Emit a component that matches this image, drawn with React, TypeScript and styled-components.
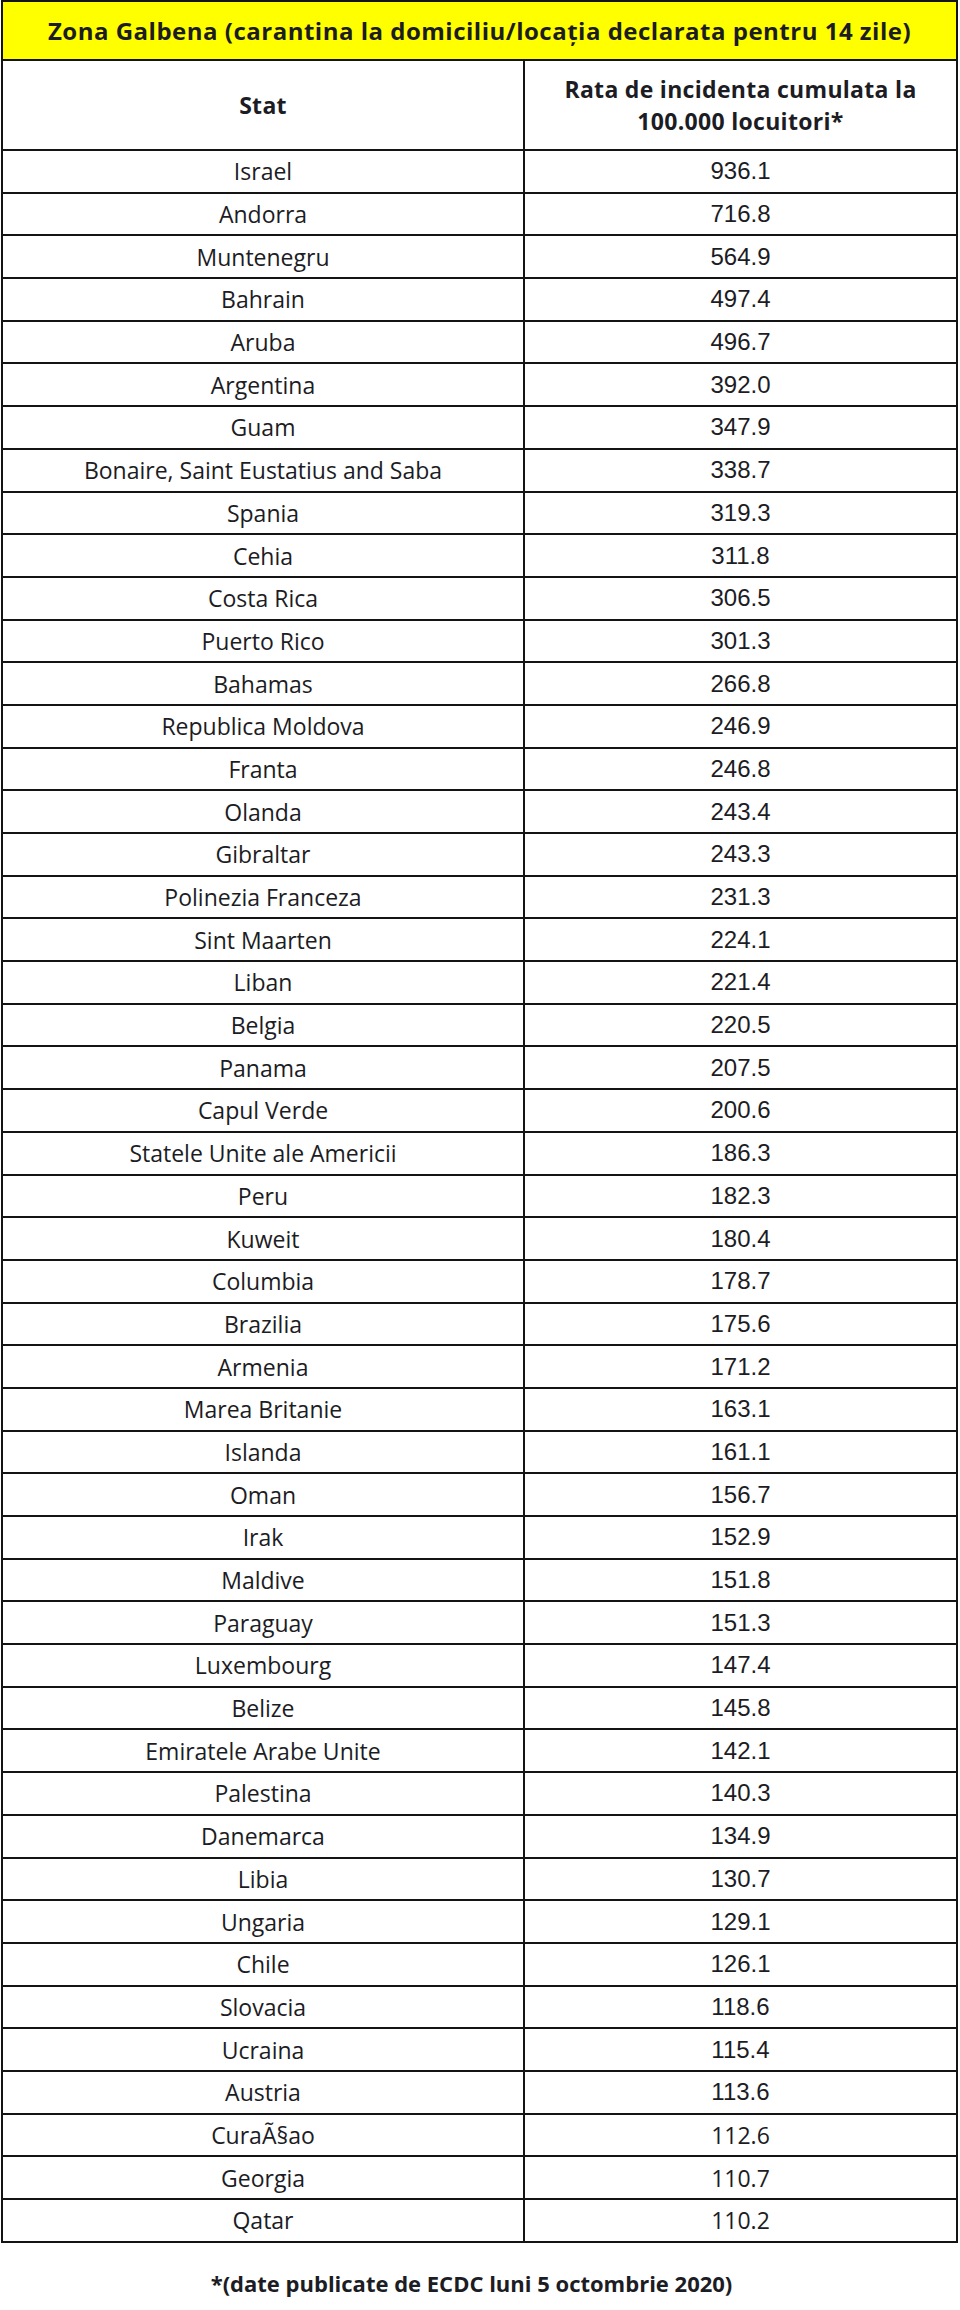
import React from 'react';
import styled, { createGlobalStyle } from 'styled-components';

const textFont = `"Open Sans", Lato, sans-serif`;
const numberFont = `"Liberation Sans", Arial, sans-serif`;
const ink = '#1c1c24';

const GlobalStyle = createGlobalStyle`
  html, body {
    margin: 0;
    padding: 0;
    background: #ffffff;
  }
`;

const Page = styled.div`
  width: 960px;
  padding: 0 2px 0 1px;
  box-sizing: border-box;
`;

const Table = styled.table`
  width: 100%;
  border-collapse: collapse;
  table-layout: fixed;
  color: ${ink};
  font-family: ${textFont};
`;

const TitleCell = styled.th`
  height: 57px;
  padding: 0;
  background: #ffff00;
  border: 2px solid #141414;
  font-size: 24px;
  font-weight: bold;
  letter-spacing: 0.5px;
  text-align: center;
`;

const HeadCell = styled.th`
  height: 88px;
  padding: 0;
  border: 2px solid #141414;
  font-size: 23px;
  font-weight: bold;
  letter-spacing: 0.3px;
  line-height: 32px;
  text-align: center;
`;

const Cell = styled.td<{ $number?: boolean; $alt?: boolean }>`
  height: 40.7px;
  padding: 0;
  border: 2px solid #141414;
  text-align: center;
  font-family: ${({ $number, $alt }) => ($number && !$alt ? numberFont : textFont)};
  font-size: ${({ $number, $alt }) => ($number && !$alt ? '24px' : '23px')};
`;

const Footnote = styled.p`
  margin: 25px 0 0;
  padding-right: 16px;
  text-align: center;
  font-family: ${textFont};
  font-size: 22px;
  font-weight: bold;
  color: ${ink};
`;

const rows: [string, string][] = [
  ['Israel', '936.1'],
  ['Andorra', '716.8'],
  ['Muntenegru', '564.9'],
  ['Bahrain', '497.4'],
  ['Aruba', '496.7'],
  ['Argentina', '392.0'],
  ['Guam', '347.9'],
  ['Bonaire, Saint Eustatius and Saba', '338.7'],
  ['Spania', '319.3'],
  ['Cehia', '311.8'],
  ['Costa Rica', '306.5'],
  ['Puerto Rico', '301.3'],
  ['Bahamas', '266.8'],
  ['Republica Moldova', '246.9'],
  ['Franta', '246.8'],
  ['Olanda', '243.4'],
  ['Gibraltar', '243.3'],
  ['Polinezia Franceza', '231.3'],
  ['Sint Maarten', '224.1'],
  ['Liban', '221.4'],
  ['Belgia', '220.5'],
  ['Panama', '207.5'],
  ['Capul Verde', '200.6'],
  ['Statele Unite ale Americii', '186.3'],
  ['Peru', '182.3'],
  ['Kuweit', '180.4'],
  ['Columbia', '178.7'],
  ['Brazilia', '175.6'],
  ['Armenia', '171.2'],
  ['Marea Britanie', '163.1'],
  ['Islanda', '161.1'],
  ['Oman', '156.7'],
  ['Irak', '152.9'],
  ['Maldive', '151.8'],
  ['Paraguay', '151.3'],
  ['Luxembourg', '147.4'],
  ['Belize', '145.8'],
  ['Emiratele Arabe Unite', '142.1'],
  ['Palestina', '140.3'],
  ['Danemarca', '134.9'],
  ['Libia', '130.7'],
  ['Ungaria', '129.1'],
  ['Chile', '126.1'],
  ['Slovacia', '118.6'],
  ['Ucraina', '115.4'],
  ['Austria', '113.6'],
  ['CuraÃ§ao', '112.6'],
  ['Georgia', '110.7'],
  ['Qatar', '110.2'],
];

const altFrom = rows.length - 3;

export default function App() {
  return (
    <Page>
      <GlobalStyle />
      <Table>
        <colgroup>
          <col style={{ width: '522px' }} />
          <col />
        </colgroup>
        <thead>
          <tr>
            <TitleCell colSpan={2}>
              Zona Galbena (carantina la domiciliu/locația declarata pentru 14 zile)
            </TitleCell>
          </tr>
          <tr>
            <HeadCell>Stat</HeadCell>
            <HeadCell>
              Rata de incidenta cumulata la
              <br />
              100.000 locuitori*
            </HeadCell>
          </tr>
        </thead>
        <tbody>
          {rows.map(([name, value], i) => (
            <tr key={name}>
              <Cell>{name}</Cell>
              <Cell $number $alt={i >= altFrom}>
                {value}
              </Cell>
            </tr>
          ))}
        </tbody>
      </Table>
      <Footnote>*(date publicate de ECDC luni 5 octombrie 2020)</Footnote>
    </Page>
  );
}
